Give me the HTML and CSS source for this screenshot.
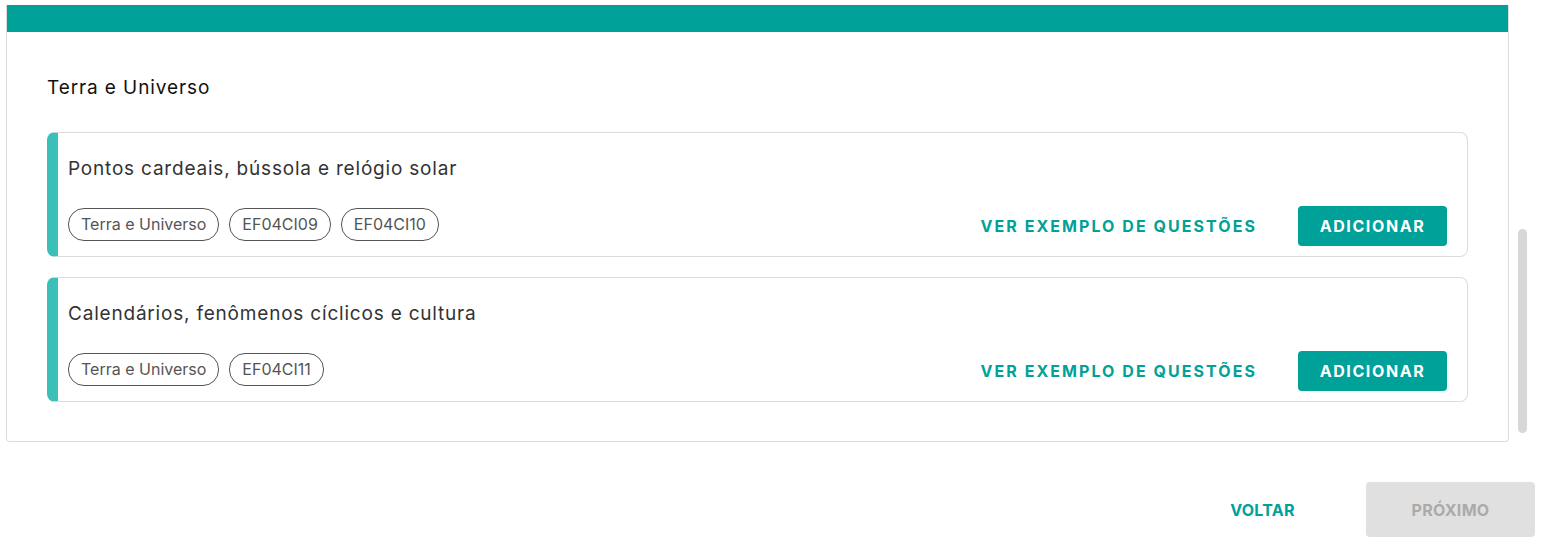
FILE: index.html
```html
<!DOCTYPE html>
<html lang="pt-BR">

<head>
    <meta charset="UTF-8">
    <meta name="viewport" content="width=device-width, initial-scale=1.0">
    <title>Habilidades</title>
    <link rel="stylesheet" href="styles.css">
</head>

<body>
    <div class="panel">
        <div class="panel-head"></div>
        <div class="panel-body">
            <h2 class="unit-title">Terra e Universo</h2>

            <div class="topic">
                <div class="topic-name">Pontos cardeais, bússola e relógio solar</div>
                <div class="topic-row">
                    <div class="chips">
                        <span class="chip">Terra e Universo</span>
                        <span class="chip">EF04CI09</span>
                        <span class="chip">EF04CI10</span>
                    </div>
                    <div class="actions">
                        <button class="link-btn">Ver exemplo de questões</button>
                        <button class="add-btn">Adicionar</button>
                    </div>
                </div>
            </div>

            <div class="topic">
                <div class="topic-name">Calendários, fenômenos cíclicos e cultura</div>
                <div class="topic-row">
                    <div class="chips">
                        <span class="chip">Terra e Universo</span>
                        <span class="chip">EF04CI11</span>
                    </div>
                    <div class="actions">
                        <button class="link-btn">Ver exemplo de questões</button>
                        <button class="add-btn">Adicionar</button>
                    </div>
                </div>
            </div>
        </div>
    </div>

    <div class="scroll-thumb"></div>

    <div class="footer">
        <button class="back-btn">Voltar</button>
        <button class="next-btn" disabled>Próximo</button>
    </div>
</body>

</html>
```

FILE: styles.css
```css
body {
    margin: 0;
    font-family: Inter, "Noto Sans", sans-serif;
    background: #fff;
    color: #333;
}

.panel {
    margin: 5px 0 0 6px;
    width: 1501px;
    border: 1px solid #dcdcdc;
    border-top: none;
    border-radius: 0 0 4px 4px;
    overflow: hidden;
}

.panel-head {
    height: 27px;
    background: #00a198;
}

.panel-body {
    padding: 44px 40px 39px 40px;
}

.unit-title {
    margin: 0 0 32px 0;
    font-size: 19px;
    font-weight: 400;
    line-height: 24px;
    letter-spacing: 0.9px;
    color: #111;
}

.topic {
    border: 1px solid #dcdcdc;
    border-left: 11px solid #3bbfb9;
    border-radius: 8px;
    padding: 24px 20px 10px 10px;
    margin-bottom: 20px;
}

.topic:last-child {
    margin-bottom: 0;
}

.topic-name {
    font-size: 19px;
    line-height: 24px;
    color: #333;
    letter-spacing: 0.8px;
}

.topic-row {
    display: flex;
    justify-content: space-between;
    align-items: center;
    margin-top: 25px;
}

.chips {
    display: flex;
    gap: 10px;
    margin-bottom: 3px;
}

.chip {
    border: 1px solid #555;
    border-radius: 16px;
    padding: 0 12px;
    height: 31px;
    line-height: 31px;
    font-size: 16px;
    color: #555;
}

.actions {
    display: flex;
    align-items: center;
    gap: 41px;
}

button {
    font-family: Inter, "Noto Sans", sans-serif;
    font-weight: 700;
    text-transform: uppercase;
    border: none;
    cursor: pointer;
}

.link-btn {
    background: none;
    color: #00a198;
    font-size: 16px;
    letter-spacing: 2.05px;
    padding: 0;
}

.add-btn {
    background: #00a198;
    color: #fff;
    font-size: 16px;
    letter-spacing: 1.6px;
    width: 149px;
    height: 40px;
    border-radius: 4px;
}

.scroll-thumb {
    position: absolute;
    left: 1518px;
    top: 229px;
    width: 9px;
    height: 204px;
    border-radius: 5px;
    background: #d5d7d8;
}

.footer {
    display: flex;
    justify-content: flex-end;
    gap: 19px;
    margin: 40px 12px 0 0;
}

.back-btn,
.next-btn {
    width: 169px;
    height: 55px;
    border-radius: 4px;
    font-size: 16px;
    letter-spacing: 0.3px;
}

.back-btn {
    background: none;
    color: #00a198;
}

.next-btn {
    background: #e0e0e0;
    color: #aaa;
}
```
